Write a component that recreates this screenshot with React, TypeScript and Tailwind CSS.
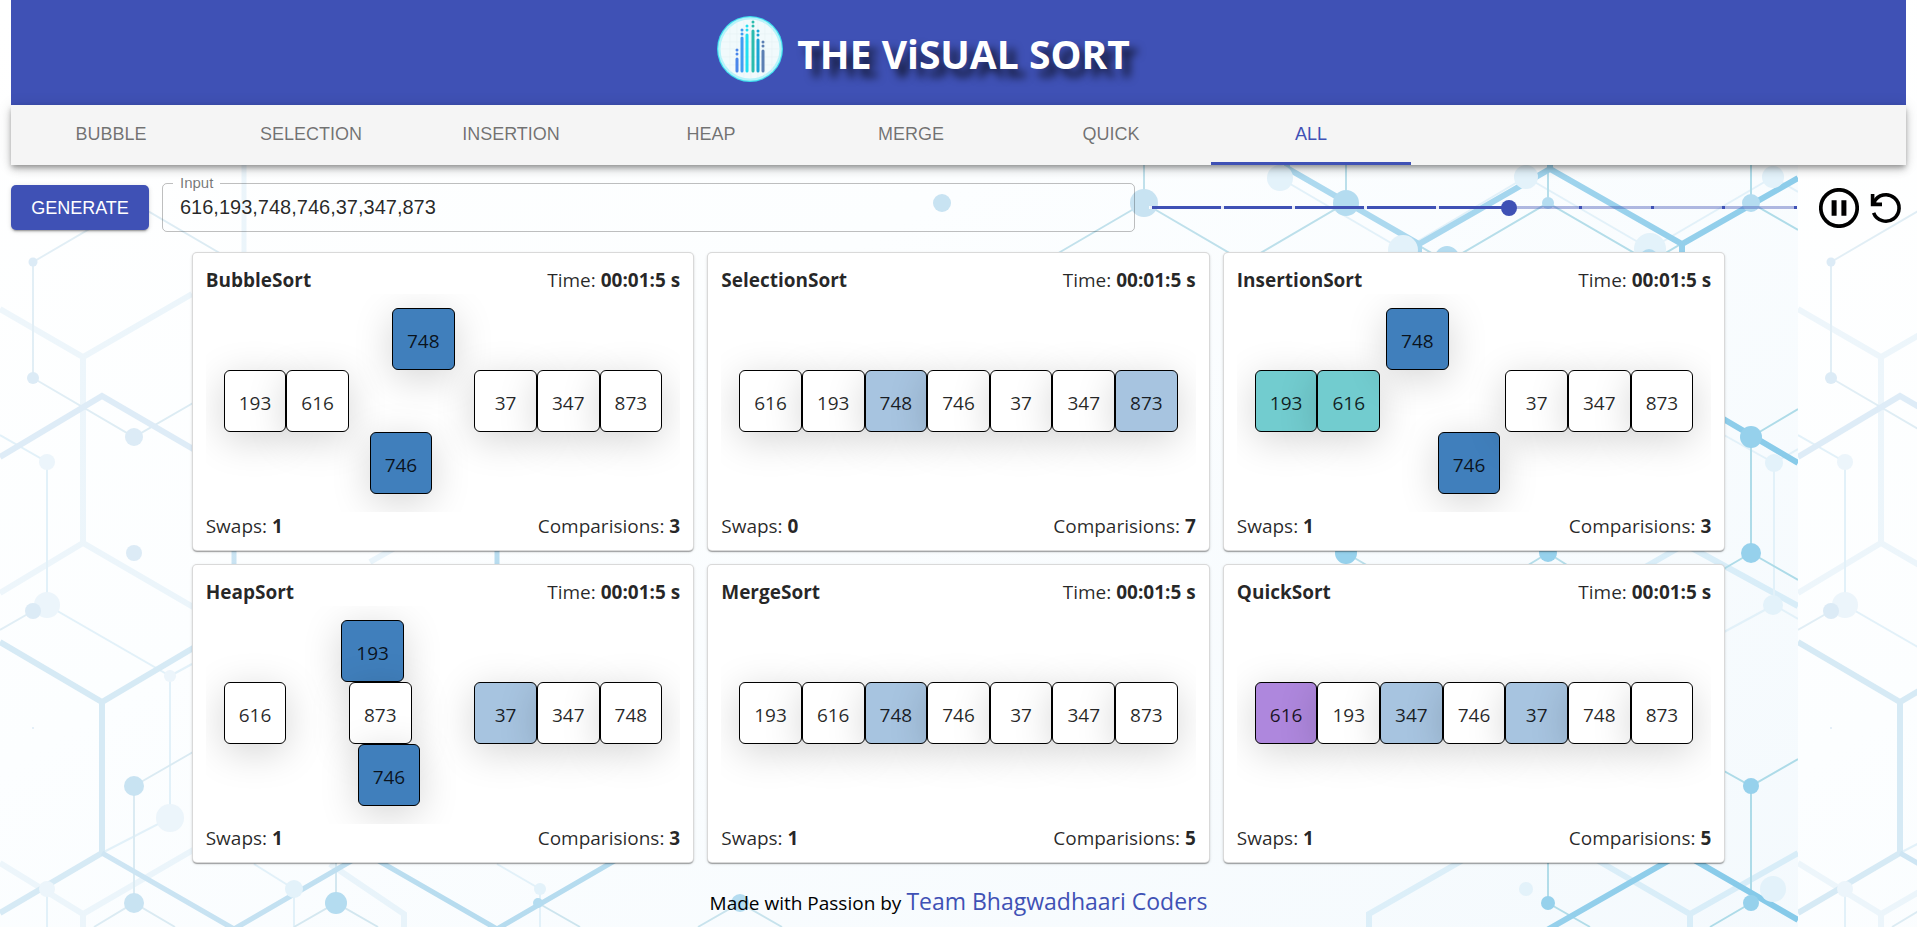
import { useState } from "react";

type Tone = "plain" | "light" | "active" | "sorted" | "pivot";

interface Tile {
  value: number;
  tone?: Tone;
  dx?: number;
  dy?: number;
}

interface SortRun {
  name: string;
  swaps: number;
  comparisons: number;
  tiles: Tile[];
}

const TONES: Record<Tone, string> = {
  plain: "bg-white",
  light: "bg-[#a7c4e0]",
  active: "bg-[#407fbc]",
  sorted: "bg-[#72cccf]",
  pivot: "bg-[#ae87dd]",
};

const TABS = ["BUBBLE", "SELECTION", "INSERTION", "HEAP", "MERGE", "QUICK", "ALL"];

const RUNS: SortRun[] = [
  {
    name: "BubbleSort",
    swaps: 1,
    comparisons: 3,
    tiles: [
      { value: 193 },
      { value: 616 },
      { value: 748, tone: "active", dx: 43, dy: -62 },
      { value: 746, tone: "active", dx: -42, dy: 62 },
      { value: 37 },
      { value: 347 },
      { value: 873 },
    ],
  },
  {
    name: "SelectionSort",
    swaps: 0,
    comparisons: 7,
    tiles: [
      { value: 616 },
      { value: 193 },
      { value: 748, tone: "light" },
      { value: 746 },
      { value: 37 },
      { value: 347 },
      { value: 873, tone: "light" },
    ],
  },
  {
    name: "InsertionSort",
    swaps: 1,
    comparisons: 3,
    tiles: [
      { value: 193, tone: "sorted" },
      { value: 616, tone: "sorted" },
      { value: 748, tone: "active", dx: 6, dy: -62 },
      { value: 746, tone: "active", dx: -5, dy: 62 },
      { value: 37 },
      { value: 347 },
      { value: 873 },
    ],
  },
  {
    name: "HeapSort",
    swaps: 1,
    comparisons: 3,
    tiles: [
      { value: 616 },
      { value: 193, tone: "active", dx: 55, dy: -62 },
      { value: 873 },
      { value: 746, tone: "active", dx: -54, dy: 62 },
      { value: 37, tone: "light" },
      { value: 347 },
      { value: 748 },
    ],
  },
  {
    name: "MergeSort",
    swaps: 1,
    comparisons: 5,
    tiles: [
      { value: 193 },
      { value: 616 },
      { value: 748, tone: "light" },
      { value: 746 },
      { value: 37 },
      { value: 347 },
      { value: 873 },
    ],
  },
  {
    name: "QuickSort",
    swaps: 1,
    comparisons: 5,
    tiles: [
      { value: 616, tone: "pivot" },
      { value: 193 },
      { value: 347, tone: "light" },
      { value: 746 },
      { value: 37, tone: "light" },
      { value: 748 },
      { value: 873 },
    ],
  },
];

function Backdrop() {
  return (
    <svg className="absolute inset-0 -z-10 h-full w-full" aria-hidden="true">
      <defs>
        <linearGradient id="sky" x1="0" y1="0" x2="1" y2="1">
          <stop offset="0" stopColor="#ffffff" />
          <stop offset="0.35" stopColor="#fcfeff" />
          <stop offset="1" stopColor="#f3f9fd" />
        </linearGradient>
        <linearGradient id="strong" gradientUnits="userSpaceOnUse" x1="0" y1="300" x2="1798" y2="600">
          <stop offset="0" stopColor="#dcebf6" />
          <stop offset="0.3" stopColor="#b7dcef" />
          <stop offset="0.75" stopColor="#acd9ef" />
          <stop offset="1" stopColor="#86cae9" />
        </linearGradient>
        <linearGradient id="faint" gradientUnits="userSpaceOnUse" x1="0" y1="300" x2="1798" y2="600">
          <stop offset="0" stopColor="#eef6fb" />
          <stop offset="1" stopColor="#d8edf8" />
        </linearGradient>
        <linearGradient id="thin" gradientUnits="userSpaceOnUse" x1="0" y1="300" x2="1798" y2="600">
          <stop offset="0" stopColor="#e3eff6" />
          <stop offset="0.3" stopColor="#cfe5ee" />
          <stop offset="1" stopColor="#addbe8" />
        </linearGradient>
        <pattern id="hexes" width="1798" height="1100" patternUnits="userSpaceOnUse">
          <rect width="1798" height="1100" fill="url(#sky)" />
          <g fill="none" stroke="url(#faint)" strokeWidth="6">
            <path d="M0 309 83 357 192 294M83 357V543M0 593 83 543 200 611" />
            <path d="M244 160V262" strokeWidth="5" />
            <path d="M0 863 83 914 200 846M83 914V940M330 864 404 914V940M370 562 400 545" />
            <path d="M1369 940V914L1470 856M1590 856 1690 914 1798 853M1690 914V940" />
            <path d="M1640 570 1680 547M1690 547 1798 606" />
          </g>
          <g fill="none" stroke="#e2f1f9" strokeWidth="2">
            <path d="M0 435 47 462V605L170 676V818L96 856M170 676 192 664M47 889V940M294 889V940M294 889 254 864M540 889V940M540 889 497 864" />
            <path d="M1280 178 1403 250M1526 177 1650 249M1526 177 1403 250M1773 177 1650 249M1773 177 1798 192M1715 430 1774 463V605L1798 619M1774 463 1798 449M1774 605 1724 632" />
          </g>
          <g fill="none" stroke="url(#thin)" strokeWidth="2">
            <path d="M33 378V262L134 203 235 262M33 378 134 437 200 399" />
            <path d="M33 611 0 630M134 903V786L200 748M94 927 134 903 175 927" />
            <path d="M336 860V903M294 927 336 903 378 927M538 903 580 927M698 927 740 903 782 927" />
            <path d="M1144 160V203L1245 262 1346 203 1447 262 1548 203 1650 262 1751 203 1798 230M1144 203 1043 262" />
            <path d="M1346 160V203M1548 160V203M1751 160V203M1751 437 1798 409M1751 437V553L1798 580M1751 553 1715 574M1346 553 1375 570M1548 553 1575 570M1548 553 1520 570" />
            <path d="M1715 766 1751 786 1798 759M1751 786V903L1710 927M1548 856V903L1590 927" />
          </g>
          <path d="M0 457 102 396 200 453" fill="none" stroke="#deecf7" strokeWidth="6" />
          <path d="M0 642 102 702 200 644M102 702V853M0 913 102 853" fill="none" stroke="#d6eaf5" strokeWidth="6" />
          <g fill="none" stroke="url(#strong)" strokeWidth="6">
            <path d="M102 853 234 929 365 853 497 929 628 853M234 547V570M497 547V570" strokeWidth="5" />
            <path d="M1287 160V168L1419 244 1550 169 1682 244 1798 178M1550 160V169M1419 244V262M1682 244V262" />
            <path d="M1715 414 1798 463M1540 934 1682 853 1798 920" />
          </g>
          <g fill="#e3f2fa">
            <circle cx="1280" cy="178" r="13" />
            <circle cx="1526" cy="177" r="12" />
            <circle cx="1773" cy="177" r="11" />
            <circle cx="1403" cy="250" r="15" />
            <circle cx="1650" cy="249" r="16" />
            <circle cx="1774" cy="463" r="9" />
            <circle cx="1773" cy="605" r="10" />
            <circle cx="1773" cy="889" r="13" />
            <circle cx="1526" cy="889" r="7" />
            <circle cx="294" cy="889" r="9" />
            <circle cx="540" cy="889" r="6" />
          </g>
          <g fill="#ecf5fb">
            <circle cx="47" cy="462" r="8" />
            <circle cx="47" cy="605" r="13" />
            <circle cx="170" cy="676" r="6" />
            <circle cx="170" cy="818" r="14" />
            <circle cx="47" cy="889" r="8" />
          </g>
          <g fill="#dcebf6">
            <circle cx="33" cy="262" r="4.5" />
            <circle cx="33" cy="378" r="6" />
            <circle cx="134" cy="437" r="9" />
            <circle cx="134" cy="553" r="8" />
            <circle cx="33" cy="611" r="8" />
            <circle cx="33" cy="728" r="1" />
          </g>
          <g fill="#c8e3f2">
            <circle cx="134" cy="786" r="10" />
            <circle cx="134" cy="903" r="10" />
            <circle cx="942" cy="203" r="9" />
            <circle cx="1144" cy="203" r="14" />
          </g>
          <g fill="#b4dcf0">
            <circle cx="336" cy="903" r="11" />
            <circle cx="538" cy="903" r="5" />
            <circle cx="740" cy="903" r="9" />
            <circle cx="1346" cy="203" r="13" />
            <circle cx="1548" cy="203" r="6" />
            <circle cx="1447" cy="258" r="12" />
            <circle cx="1649" cy="258" r="9" />
            <circle cx="1751" cy="203" r="9" />
          </g>
          <g fill="#96d1ec">
            <circle cx="1346" cy="553" r="11" />
            <circle cx="1548" cy="553" r="9" />
            <circle cx="1751" cy="437" r="11" />
            <circle cx="1751" cy="553" r="10" />
            <circle cx="1751" cy="786" r="8" />
            <circle cx="1751" cy="903" r="8" />
            <circle cx="1548" cy="903" r="7" />
          </g>
        </pattern>
      </defs>
      <rect width="100%" height="100%" fill="url(#hexes)" />
    </svg>
  );
}

const LOGO_BARS = [
  { x: 20, top: 43, dots: [34, 38], color: "#4a86ea" },
  { x: 25, top: 22, dots: [14, 18], color: "#419cf2" },
  { x: 30, top: 19, dots: [10, 14], color: "#21dff0" },
  { x: 36, top: 15, dots: [6, 10], color: "#2bbcae" },
  { x: 41, top: 24, dots: [15, 19], color: "#1ba6d6" },
  { x: 46, top: 35, dots: [26, 30], color: "#5b7fb3" },
];

function Logo() {
  return (
    <svg className="size-[66px]" viewBox="0 0 66 66" aria-hidden="true">
      <circle cx="33" cy="33" r="33" fill="#3fe0ee" />
      <circle cx="33" cy="33" r="31.8" fill="#b5f3fa" />
      <circle cx="33" cy="33" r="29.5" fill="#f1fafc" />
      <path
        d="M8 18H58M4 26H62M4 33H62M4 41H62M8 49H58M13 10V56M20 6V60M27 4V62M34 4V62M41 4V62M48 6V60M55 12V54"
        stroke="#e6f2f5"
        strokeWidth="0.7"
      />
      {LOGO_BARS.map((bar) => (
        <g key={bar.x} fill={bar.color} stroke={bar.color} strokeLinecap="round">
          <path d={`M${bar.x} ${bar.top}V55`} strokeWidth="3" />
          {bar.dots.map((y) => (
            <circle key={y} cx={bar.x} cy={y} r="1.5" stroke="none" />
          ))}
        </g>
      ))}
    </svg>
  );
}

function SpeedSlider() {
  const [speed, setSpeed] = useState(5);
  const steps = 9;
  return (
    <div className="relative flex h-5 flex-1 items-center">
      <div className="h-[3px] w-full bg-[#3f51b5]/40">
        <div className="h-full bg-[#3f51b5]" style={{ width: `${(speed / steps) * 100}%` }} />
      </div>
      <div className="absolute inset-x-0 flex justify-between">
        {Array.from({ length: steps + 1 }, (_, i) => (
          <span key={i} className={`-mx-px h-[3px] w-[3px] ${i < speed ? "bg-white/90" : "bg-[#3f51b5]"}`} />
        ))}
      </div>
      <input
        type="range"
        aria-label="Speed"
        min={0}
        max={steps}
        value={speed}
        onChange={(e) => setSpeed(Number(e.target.value))}
        className="absolute -inset-x-2 inset-y-0 cursor-pointer appearance-none bg-transparent [&::-webkit-slider-thumb]:size-4 [&::-webkit-slider-thumb]:appearance-none [&::-webkit-slider-thumb]:rounded-full [&::-webkit-slider-thumb]:bg-[#3f51b5]"
      />
    </div>
  );
}

function SortCard({ run }: { run: SortRun }) {
  return (
    <section className="rounded-[5px] border border-black/15 bg-white px-[13px] pt-[13px] pb-[10px] text-[19px] leading-7 text-black/85 shadow-[0_2px_1px_-1px_rgba(0,0,0,0.2),0_1px_1px_rgba(0,0,0,0.14),0_1px_3px_rgba(0,0,0,0.12)]">
      <div className="flex justify-between">
        <h2 className="font-bold">{run.name}</h2>
        <p>
          Time: <b>00:01:5 s</b>
        </p>
      </div>
      <div className="flex h-[218px] items-start overflow-hidden px-[18px] pt-[76px]">
        {run.tiles.map((tile) => (
          <div
            key={tile.value}
            className={`flex h-[62px] flex-1 items-center justify-center rounded-md border border-black pt-1 shadow-[0_8px_38px_rgba(0,0,0,0.17)] ${TONES[tile.tone ?? "plain"]}`}
            style={{ transform: `translate(${tile.dx ?? 0}px, ${tile.dy ?? 0}px)` }}
          >
            {tile.value}
          </div>
        ))}
      </div>
      <div className="flex justify-between">
        <p>
          Swaps: <b>{run.swaps}</b>
        </p>
        <p>
          Comparisions: <b>{run.comparisons}</b>
        </p>
      </div>
    </section>
  );
}

export default function App() {
  const [tab, setTab] = useState("ALL");
  const [values, setValues] = useState("616,193,748,746,37,347,873");

  return (
    <div className="relative isolate min-h-screen overflow-hidden font-['Open_Sans','Noto_Sans',sans-serif] text-black">
      <Backdrop />
      <div className="px-[11px]">
        <header className="flex h-[105px] items-center justify-center bg-[#3f51b5] pr-[70px] pb-[7px]">
          <Logo />
          <h1 className="ml-[14px] pt-2 text-[39px] leading-none font-bold text-white [text-shadow:8px_8px_8px_rgba(0,0,0,0.7)]">
            THE ViSUAL SORT
          </h1>
        </header>
        <nav className="flex h-[60px] bg-[#f5f5f5] font-['Liberation_Sans',Arial,sans-serif] text-lg shadow-[0_3px_5px_-1px_rgba(0,0,0,0.3),0_5px_8px_rgba(0,0,0,0.14),0_1px_14px_rgba(0,0,0,0.12)]">
          {TABS.map((name) => (
            <button
              key={name}
              type="button"
              onClick={() => setTab(name)}
              className={`w-[200px] border-b-[3px] ${name === tab ? "border-[#3f51b5] text-[#3f51b5]" : "border-transparent text-black/55"}`}
            >
              {name}
            </button>
          ))}
        </nav>
      </div>

      <div className="mt-[18px] flex items-center pr-[13px] pl-[11px] font-['Liberation_Sans',Arial,sans-serif]">
        <button
          type="button"
          className="h-[45px] w-[138px] rounded-[5px] bg-[#3f51b5] text-lg text-white shadow-[0_3px_1px_-2px_rgba(0,0,0,0.2),0_2px_2px_rgba(0,0,0,0.14),0_1px_5px_rgba(0,0,0,0.12)]"
        >
          GENERATE
        </button>
        <fieldset className="-mt-[9px] ml-[13px] h-[58px] min-w-0 flex-[29] rounded-[5px] border border-black/25 px-[10px]">
          <legend className="h-[18px] px-[7px] text-[15px] leading-[18px] text-black/55">
            <label htmlFor="values">Input</label>
          </legend>
          <input
            id="values"
            value={values}
            onChange={(e) => setValues(e.target.value)}
            className="block h-[30px] w-full bg-transparent px-[7px] text-xl text-black/85 outline-none"
          />
        </fieldset>
        <div className="flex flex-[23] items-center pl-[15px]">
          <SpeedSlider />
          <button type="button" aria-label="Pause" className="ml-[23px]">
            <svg className="size-10" viewBox="0 0 40 40">
              <circle cx="20" cy="20" r="18.2" fill="none" stroke="#000" strokeWidth="3.7" />
              <path d="M12.6 12.3h5v15.4h-5zM22.4 12.3h5v15.4h-5z" />
            </svg>
          </button>
          <button type="button" aria-label="Restart" className="ml-[9px]">
            <svg className="size-9" viewBox="0 0 36 36" fill="none" stroke="#000" strokeWidth="3.6">
              <path d="M5.6 22.8A13.2 13.2 0 1 0 6 12.2" />
              <path d="M4.6 4V14.4H14" />
              <path d="M4 9 10 14H4z" fill="#000" stroke="none" />
            </svg>
          </button>
        </div>
      </div>

      <main className="mx-auto mt-5 grid w-4/5 grid-cols-3 gap-[13px]">
        {RUNS.map((run) => (
          <SortCard key={run.name} run={run} />
        ))}
      </main>

      <footer className="mt-5 flex items-baseline justify-center gap-[5px] text-[19px] leading-9">
        <span>Made with Passion by</span>
        <a href="#team" className="text-[23px] text-[#3f51b5]">
          Team Bhagwadhaari Coders
        </a>
      </footer>
    </div>
  );
}
